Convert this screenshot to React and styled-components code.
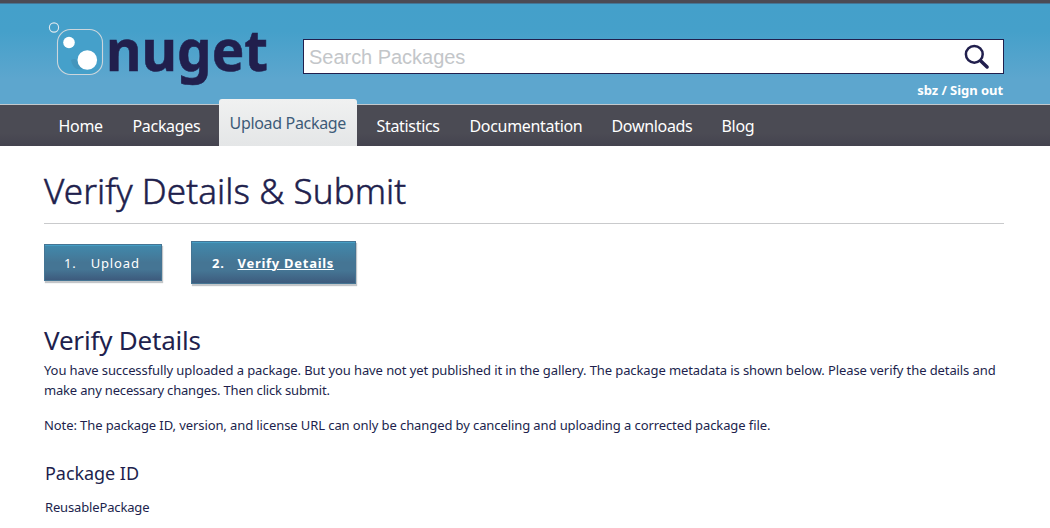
import React from 'react';
import styled, { createGlobalStyle } from 'styled-components';

const navy = '#211f4d';
const sans = '"Noto Sans", "Open Sans", sans-serif';

const GlobalStyle = createGlobalStyle`
  * { box-sizing: border-box; }
  body { margin: 0; background: #fff; color: ${navy}; font-family: ${sans}; }
  h1, h2, h3, p, ol, ul { margin: 0; padding: 0; font-weight: 400; list-style: none; }
  a { color: inherit; text-decoration: none; }
`;

const Page = styled.div`
  width: 1050px;
  height: 528px;
  overflow: hidden;
`;

const Header = styled.header`
  display: flex;
  height: 105px;
  padding-left: 44px;
  border-top: 3px solid #4b4b54;
  border-bottom: 1px solid #c3c9cd;
  background: linear-gradient(#457594 1px, #44a0ca 1px, #45a0ca 28px, #5da6ce 76px, #5da6ce);
`;

const Logo = styled.svg`
  display: block;
  flex: none;
  width: 259px;
  height: 100px;
`;

const HeaderTools = styled.div`
  width: 701px;
  padding-top: 36px;
`;

const SearchBox = styled.form`
  display: flex;
  align-items: center;
  justify-content: space-between;
  height: 35px;
  padding: 0 13px 0 5px;
  border: 1px solid ${navy};
  background: #fff;
`;

const SearchInput = styled.input`
  flex: 1;
  min-width: 0;
  height: 31px;
  padding: 2px 0 0;
  border: 0;
  outline: 0;
  background: none;
  font: 20px "Liberation Sans", Arial, sans-serif;
  letter-spacing: -0.03px;
  &::placeholder { color: #c3c6c9; opacity: 1; }
`;

const SearchButton = styled.button`
  width: 26px;
  height: 26px;
  padding: 0;
  border: 0;
  background: none;
  svg { display: block; }
`;

const UserLinks = styled.div`
  padding: 7px 1px 0 0;
  color: #fff;
  font-size: 13px;
  font-weight: 700;
  line-height: 18px;
  text-align: right;
  letter-spacing: -0.05px;
`;

const Nav = styled.nav`
  display: flex;
  align-items: flex-end;
  height: 41px;
  padding-left: 43px;
  background: linear-gradient(#4b4b54 28px, #44434f);
`;

const NavLink = styled.a`
  width: ${(p) => p.$width}px;
  height: 41px;
  padding-left: 15.5px;
  color: #fff;
  font-size: 16px;
  line-height: 43px;
  letter-spacing: -0.32px;
  white-space: nowrap;
`;

const ActiveNavLink = styled(NavLink)`
  height: 47px;
  margin-right: 4px;
  padding-left: 10.5px;
  border-radius: 3px 3px 0 0;
  background: linear-gradient(#f0f1f1, #e4e6e7);
  color: #3d5b78;
  line-height: 49px;
`;

const Main = styled.main`
  width: 1004px;
  padding: 22px 0 0 44px;
`;

const Title = styled.h1`
  height: 56px;
  border-bottom: 1px solid #c9cacc;
  font-size: 35px;
  font-weight: 300;
  line-height: 46px;
  letter-spacing: 0.08px;
  -webkit-text-stroke: 0.5px ${navy};
`;

const Steps = styled.ol`
  display: flex;
  align-items: center;
  gap: 29px;
  height: 44px;
  margin-top: 16px;
`;

const Step = styled.li`
  display: flex;
  gap: ${(p) => (p.$current ? 13 : 14)}px;
  width: ${(p) => (p.$current ? 165 : 118)}px;
  height: ${(p) => (p.$current ? 43 : 37)}px;
  padding-left: ${(p) => (p.$current ? 20 : 19)}px;
  border: 1px solid #457594;
  background: linear-gradient(#469ec4 1px, #4188ab 1px, #457594 50%, #457594 70%, #3d5b7d);
  box-shadow: 1px 2px 1px #c3c6c9;
  color: #fff;
  font-size: 13px;
  font-weight: ${(p) => (p.$current ? 700 : 400)};
  line-height: ${(p) => (p.$current ? 42 : 37)}px;
  letter-spacing: ${(p) => (p.$current ? 0.72 : 0.85)}px;
  white-space: nowrap;
  a { text-decoration: ${(p) => (p.$current ? 'underline' : 'none')}; }
`;

const SectionTitle = styled.h2`
  margin-top: 40px;
  font-size: 26px;
  line-height: 32px;
  letter-spacing: -0.2px;
`;

const Paragraph = styled.p`
  margin-top: ${(p) => p.$top}px;
  font-size: 13px;
  line-height: 20px;
  letter-spacing: -0.095px;
  white-space: nowrap;
`;

const ClosingLine = styled.span`
  letter-spacing: -0.18px;
`;

const Field = styled.section`
  margin-top: 26px;
  padding-left: 1px;
`;

const FieldLabel = styled.h3`
  font-size: 18px;
  line-height: 24px;
  letter-spacing: -0.05px;
`;

const FieldValue = styled.div`
  margin-top: 12px;
  font-size: 13px;
  line-height: 20px;
  letter-spacing: -0.15px;
`;

function NugetLogo() {
  return (
    <Logo viewBox="44 4 259 100" aria-label="nuget">
      <circle cx="54" cy="28.5" r="4.6" fill="none" stroke="#dfe8ee" strokeWidth="1.1" />
      <rect x="57.5" y="30.5" width="45" height="45" rx="13" fill="#45a0ca" stroke="#ccd6dc" strokeWidth="1.1" />
      <path d="M71 61q5-3 7 2l4 7q-9 2-11-9z" fill="#4188ab" opacity=".45" />
      <circle cx="69" cy="43.5" r="5.8" fill="#fff" />
      <circle cx="87.3" cy="61" r="9.8" fill="#fff" />
      <text x="106" y="72" textLength="162" lengthAdjust="spacingAndGlyphs" fill={navy} stroke={navy} strokeWidth="0.6" fontFamily={sans} fontSize="58" fontWeight="700">
        nuget
      </text>
    </Logo>
  );
}

function SearchIcon() {
  return (
    <svg width="26" height="26" viewBox="0 0 26 26" fill="none" stroke={navy}>
      <circle cx="10.3" cy="10.3" r="8.4" strokeWidth="2.5" />
      <path d="M16.8 17l6.3 6" strokeWidth="3.5" strokeLinecap="round" />
    </svg>
  );
}

export default function App() {
  return (
    <Page>
      <GlobalStyle />
      <Header>
        <NugetLogo />
        <HeaderTools>
          <SearchBox>
            <SearchInput placeholder="Search Packages" />
            <SearchButton type="button" aria-label="Search"><SearchIcon /></SearchButton>
          </SearchBox>
          <UserLinks><a href="#profile">sbz</a> / <a href="#signout">Sign out</a></UserLinks>
        </HeaderTools>
      </Header>
      <Nav>
        <NavLink href="#home" $width={74}>Home</NavLink>
        <NavLink href="#packages" $width={102}>Packages</NavLink>
        <ActiveNavLink href="#upload" $width={138}>Upload Package</ActiveNavLink>
        <NavLink href="#statistics" $width={93}>Statistics</NavLink>
        <NavLink href="#docs" $width={142}>Documentation</NavLink>
        <NavLink href="#downloads" $width={110}>Downloads</NavLink>
        <NavLink href="#blog" $width={64}>Blog</NavLink>
      </Nav>
      <Main>
        <Title>Verify Details &amp; Submit</Title>
        <Steps>
          <Step><span>1.</span><a href="#step1">Upload</a></Step>
          <Step $current><span>2.</span><a href="#step2">Verify Details</a></Step>
        </Steps>
        <SectionTitle>Verify Details</SectionTitle>
        <Paragraph $top={4}>
          You have successfully uploaded a package. But you have not yet published it in the gallery. The package metadata is shown below. Please verify the details and
          <br />
          <ClosingLine>make any necessary changes. Then click submit.</ClosingLine>
        </Paragraph>
        <Paragraph $top={15}>
          Note: The package ID, version, and license URL can only be changed by canceling and uploading a corrected package file.
        </Paragraph>
        <Field>
          <FieldLabel>Package ID</FieldLabel>
          <FieldValue>ReusablePackage</FieldValue>
        </Field>
      </Main>
    </Page>
  );
}
